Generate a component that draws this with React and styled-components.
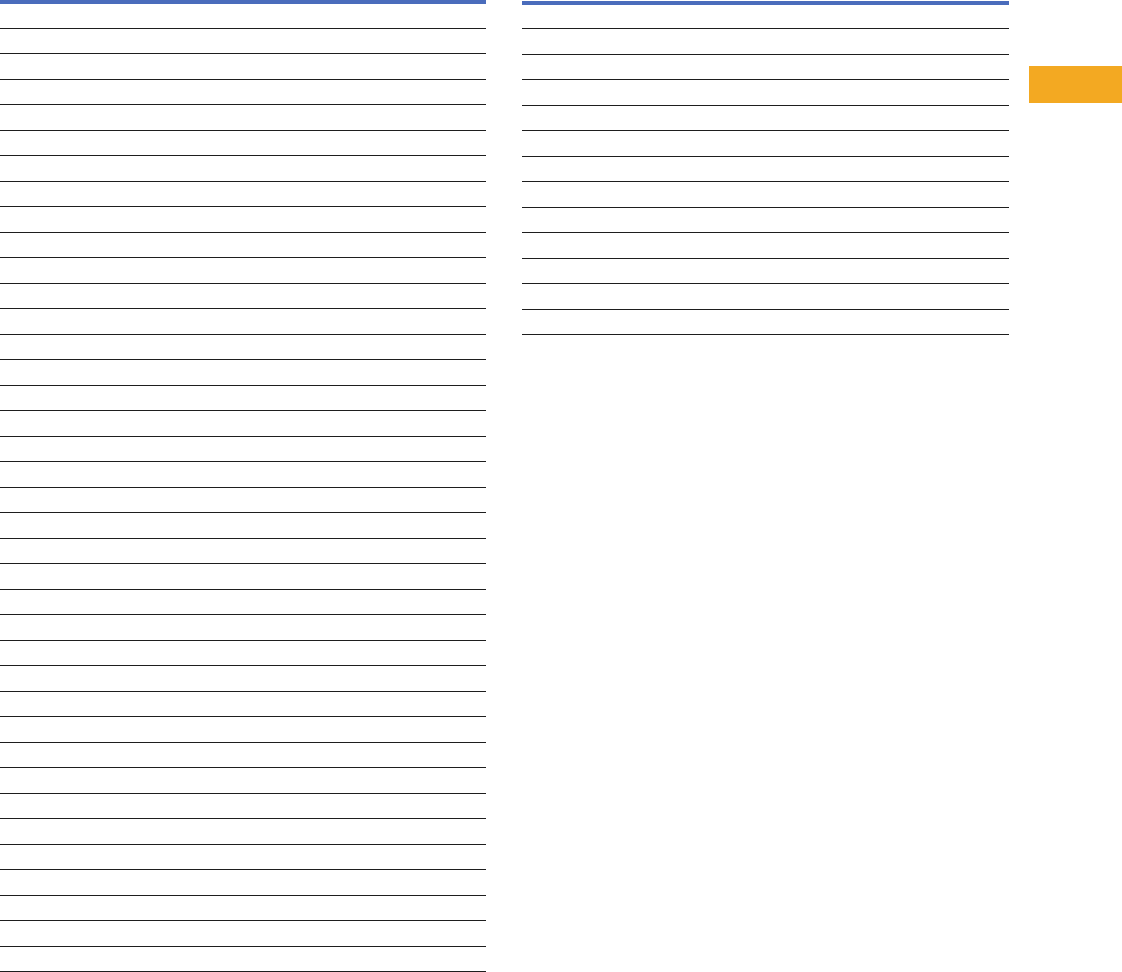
import React from "react";
import styled, { createGlobalStyle } from "styled-components";

const GlobalStyle = createGlobalStyle`
  html, body {
    margin: 0;
    padding: 0;
    background: #ffffff;
    font-family: "Liberation Sans", Arial, sans-serif;
  }
  body {
    height: 972px;
    overflow: hidden;
  }
`;

const Page = styled.div`
  display: flex;
  align-items: flex-start;
  height: 972px;
  overflow: hidden;
`;

const Sheet = styled.div`
  width: ${(p) => p.$width}px;
  margin-top: ${(p) => p.$offset}px;
  margin-right: ${(p) => p.$gap}px;
  flex-shrink: 0;
  border-top: 4px solid #4a6cbc;
  display: flex;
  flex-direction: column;
`;

const Row = styled.div`
  height: ${(p) => p.$h}px;
  border-bottom: 1px solid #1e1e1e;
`;

const Tab = styled.div`
  flex: 1;
  margin-top: 66px;
  height: 37px;
  background: #f3a922;
`;

// row heights alternate 24/25px so the rules land on a 25.5px pitch
const heights = (n, first, odd, even) =>
  Array.from({ length: n }, (_, i) => (i === 0 ? first : i % 2 ? odd : even));

const App = () => {
  return (
    <>
      <GlobalStyle />
      <Page>
        <Sheet $width={486} $offset={0} $gap={36}>
          {heights(39, 24, 24, 25).map((h, i) => (
            <Row key={i} $h={h} />
          ))}
        </Sheet>
        <Sheet $width={487} $offset={1} $gap={20}>
          {heights(13, 23, 25, 24).map((h, i) => (
            <Row key={i} $h={h} />
          ))}
        </Sheet>
        <Tab />
      </Page>
    </>
  );
};

export default App;
